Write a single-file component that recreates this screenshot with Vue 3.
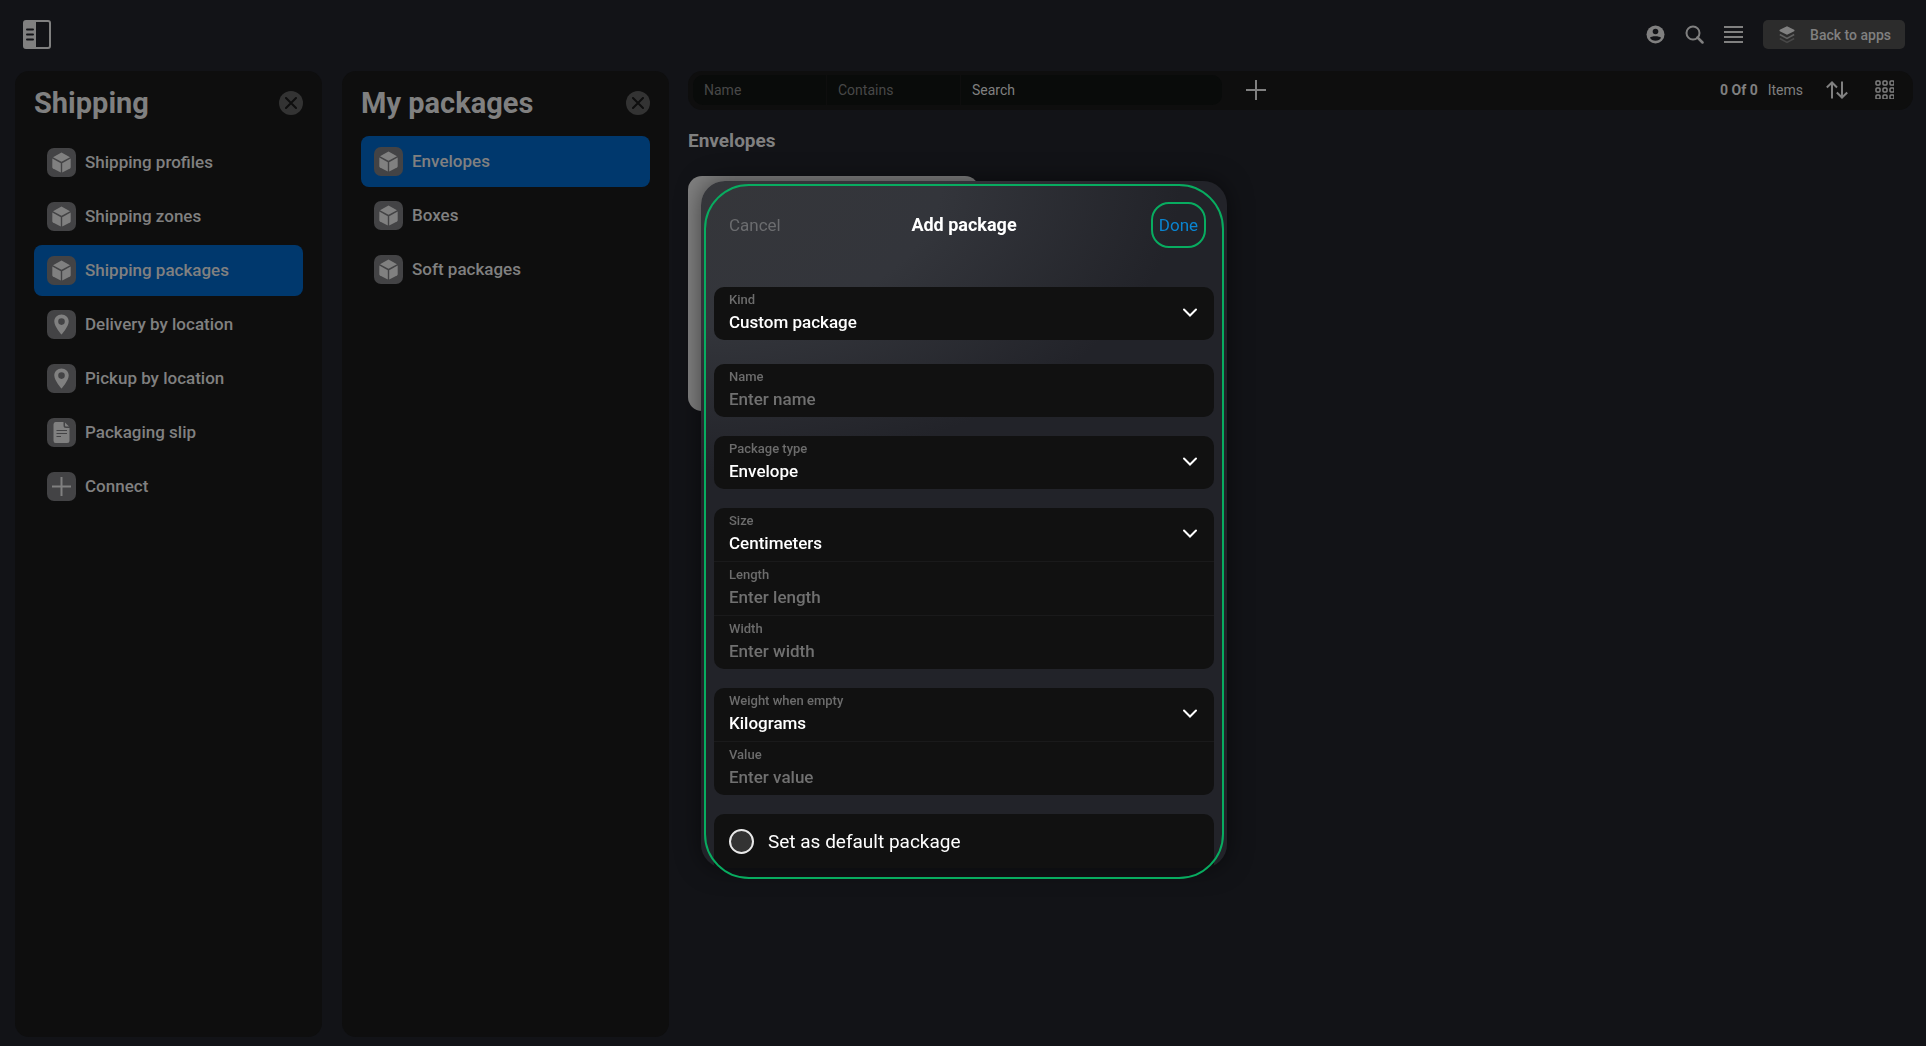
<template>
  <div class="page">
    <header class="topbar">
      <button class="icon-btn" aria-label="Toggle sidebar">
        <svg width="28" height="29" viewBox="0 0 28 29">
          <rect x="1" y="1" width="26" height="27" rx="2" fill="none" stroke="#808080" stroke-width="2" />
          <path d="M1 2h12v25H1z" fill="#808080" />
          <path d="M4 9.500h6M4 14.500h6M4 19.500h6" stroke="#121317" stroke-width="2" stroke-linecap="round" />
        </svg>
      </button>
      <div class="topbar-actions">
        <button class="icon-btn" aria-label="Account">
          <svg width="19" height="19" viewBox="0 0 19 19">
            <circle cx="9.500" cy="9.500" r="9" fill="#808080" />
            <circle cx="9.500" cy="6.500" r="2.800" fill="#121317" />
            <path d="M4 12.800c1-2 9.500-2 11 0c-1.500 4-9.500 4-11 0z" fill="#121317" />
          </svg>
        </button>
        <button class="icon-btn" aria-label="Search">
          <svg width="19" height="19" viewBox="0 0 19 19" fill="none" stroke="#808080">
            <circle cx="8" cy="8" r="6.500" stroke-width="2" />
            <path d="M12.500 12.500l5 5" stroke-width="2.500" stroke-linecap="round" />
          </svg>
        </button>
        <button class="icon-btn" aria-label="Menu">
          <svg width="19" height="19" viewBox="0 0 19 19">
            <path d="M0 2h19M0 7h19M0 12h19M0 17h19" stroke="#808080" stroke-width="2" />
          </svg>
        </button>
        <button class="btn-back">
          <svg width="16" height="18" viewBox="0 0 16 18">
            <path d="M8 0.300l7.200 3.500q.8.700 0 1.400L8 8.700L.8 5.200Q0 4.500.8 3.800z" fill="#808080" />
            <path d="M.8 8.500l7.200 4l7.200-4" fill="none" stroke="#606060" stroke-width="1.500" />
            <path d="M.8 12.500l7.200 4l7.200-4" fill="none" stroke="#484848" stroke-width="1.500" />
          </svg>
          <span>Back to apps</span>
        </button>
      </div>
    </header>

    <div class="layout">
      <nav v-for="panel in panels" :key="panel.title" class="panel" :class="panel.size">
        <div class="panel-head">
          <h1>{{ panel.title }}</h1>
          <button class="btn-close" :aria-label="'Close ' + panel.title">
            <svg width="12" height="12" viewBox="0 0 12 12">
              <path d="M1 1l10 10M11 1L1 11" stroke="#0e0e0e" stroke-width="2" stroke-linecap="round" />
            </svg>
          </button>
        </div>
        <button
          v-for="item in panel.items"
          :key="item.name"
          class="panel-item"
          :class="{ active: panel.active === item.name }"
          @click="panel.active = item.name"
        >
          <span class="tile">
            <svg v-if="item.icon === 'box'" width="19" height="21" viewBox="0 0 19 21" fill="#808080">
              <path d="M9.500 0.500L18 5.200L9.500 9.700L1 5.200z" />
              <path d="M0.300 6.600L8.800 11.200V20.500L1 16.400q-.7-.4-.7-1.200z" />
              <path d="M18.700 6.600L10.200 11.200V20.500L18 16.400q.7-.4.700-1.200z" />
            </svg>
            <svg v-else-if="item.icon === 'pin'" width="15" height="21" viewBox="0 0 15 21">
              <path
                d="M7.500 0.500C3.500 0.500 0.300 3.600 0.300 7.500C0.300 12.500 7.500 20.500 7.500 20.500S14.700 12.500 14.700 7.500C14.700 3.600 11.500 0.500 7.500 0.500zM7.500 4.300a3.300 3.300 0 1 1 0 6.600a3.300 3.300 0 1 1 0-6.600z"
                fill="#808080"
                fill-rule="evenodd"
              />
            </svg>
            <svg v-else-if="item.icon === 'doc'" width="17" height="21" viewBox="0 0 17 21">
              <path d="M2.500 0H10.500V3.500Q10.500 6 13 6H16.500V18.500Q16.500 21 14 21H2.500Q.5 21 .5 18.500V2.500Q.5 0 2.500 0z" fill="#808080" />
              <path d="M12 0.500L16 4.600H13Q12 4.600 12 3.600z" fill="#808080" />
              <path d="M3.500 8.500h10.500M3.500 11.500h10.500M3.500 14.500h4.500" stroke="#434345" />
            </svg>
            <svg v-else width="19" height="19" viewBox="0 0 19 19">
              <path d="M9.500 0v19M0 9.500h19" stroke="#808080" stroke-width="2" />
            </svg>
          </span>
          <span>{{ item.name }}</span>
        </button>
      </nav>

      <main class="content">
        <div class="toolbar">
          <div class="filter">
            <button class="filter-part">Name</button>
            <button class="filter-part">Contains</button>
            <input v-model="search" class="filter-input" placeholder="Search" aria-label="Search packages" />
          </div>
          <button class="icon-btn btn-add" aria-label="Add filter">
            <svg width="20" height="20" viewBox="0 0 20 20">
              <path d="M10 0v20M0 10h20" stroke="#808080" stroke-width="2" />
            </svg>
          </button>
          <div class="toolbar-right">
            <b>0 Of 0</b>
            <span>Items</span>
            <button class="icon-btn btn-sort" aria-label="Sort">
              <svg width="22" height="18" viewBox="0 0 22 18" fill="none" stroke="#808080" stroke-width="2">
                <path d="M6 17.500V2M0.800 6.500L6 1.500L11 6.500" />
                <path d="M16 0.500V16M10.800 11.500L16 16.500L21.200 11.500" />
              </svg>
            </button>
            <button class="icon-btn btn-grid" aria-label="Grid view">
              <svg width="19" height="19" viewBox="0 0 19 19" fill="none" stroke="#808080" stroke-width="1.500">
                <template v-for="y in 3" :key="y">
                  <rect v-for="x in 3" :key="x" :x="x * 7 - 6" :y="y * 7 - 6" width="4" height="4" rx="1" />
                </template>
              </svg>
            </button>
          </div>
        </div>
        <h2>Envelopes</h2>
        <div class="package-card"></div>
      </main>
    </div>

    <div class="overlay">
      <form class="modal" @submit.prevent>
        <div class="modal-inner">
          <div class="modal-head">
            <button type="button" class="btn-cancel">Cancel</button>
            <h3>Add package</h3>
            <button type="submit" class="btn-done">Done</button>
          </div>
          <div v-for="(group, i) in groups" :key="i" class="group">
            <div v-for="field in group" :key="field.id" class="field">
              <label :for="field.id">{{ field.label }}</label>
              <template v-if="field.options">
                <select :id="field.id" v-model="form[field.id]">
                  <option v-for="o in field.options" :key="o">{{ o }}</option>
                </select>
                <svg class="chevron" width="16" height="10" viewBox="0 0 16 10">
                  <path d="M2 1.500l6 6l6-6" fill="none" stroke="#fff" stroke-width="2" stroke-linecap="round" />
                </svg>
              </template>
              <input v-else :id="field.id" v-model="form[field.id]" type="text" :placeholder="field.placeholder" />
            </div>
          </div>
          <label class="default-row">
            <input v-model="form.isDefault" type="checkbox" />
            <span>Set as default package</span>
          </label>
        </div>
      </form>
    </div>
  </div>
</template>

<script setup>
import { ref, reactive } from 'vue'

const search = ref('')

const panels = reactive([
  {
    title: 'Shipping',
    size: 'panel-main',
    active: 'Shipping packages',
    items: [
      { name: 'Shipping profiles', icon: 'box' },
      { name: 'Shipping zones', icon: 'box' },
      { name: 'Shipping packages', icon: 'box' },
      { name: 'Delivery by location', icon: 'pin' },
      { name: 'Pickup by location', icon: 'pin' },
      { name: 'Packaging slip', icon: 'doc' },
      { name: 'Connect', icon: 'plus' }
    ]
  },
  {
    title: 'My packages',
    size: 'panel-sub',
    active: 'Envelopes',
    items: [
      { name: 'Envelopes', icon: 'box' },
      { name: 'Boxes', icon: 'box' },
      { name: 'Soft packages', icon: 'box' }
    ]
  }
])

const form = reactive({
  kind: 'Custom package',
  name: '',
  type: 'Envelope',
  size: 'Centimeters',
  length: '',
  width: '',
  weight: 'Kilograms',
  value: '',
  isDefault: false
})

const groups = [
  [{ id: 'kind', label: 'Kind', options: ['Custom package'] }],
  [{ id: 'name', label: 'Name', placeholder: 'Enter name' }],
  [{ id: 'type', label: 'Package type', options: ['Envelope', 'Box', 'Soft package'] }],
  [
    { id: 'size', label: 'Size', options: ['Centimeters', 'Inches'] },
    { id: 'length', label: 'Length', placeholder: 'Enter length' },
    { id: 'width', label: 'Width', placeholder: 'Enter width' }
  ],
  [
    { id: 'weight', label: 'Weight when empty', options: ['Kilograms', 'Pounds'] },
    { id: 'value', label: 'Value', placeholder: 'Enter value' }
  ]
]
</script>

<style>
body {
  background: #121317;
}
</style>

<style scoped>
.page {
  min-height: 100vh;
  display: flex;
  flex-direction: column;
  box-sizing: border-box;
  padding-bottom: 9px;
  background: #121317;
  color: #808080;
  font-family: Roboto, sans-serif;
}
.page * {
  box-sizing: border-box;
}
button,
input,
select {
  font-family: inherit;
  color: inherit;
  background: none;
  border: none;
  padding: 0;
  margin: 0;
  outline: none;
}
button {
  cursor: pointer;
}
svg {
  display: block;
  flex: none;
}
h1,
h2,
h3 {
  margin: 0;
}
.topbar {
  height: 71px;
  padding: 0 21px 2px 23px;
  display: flex;
  align-items: center;
  justify-content: space-between;
}
.topbar-actions {
  display: flex;
  align-items: center;
  gap: 20px;
}
.btn-back {
  display: flex;
  align-items: center;
  gap: 15px;
  height: 29px;
  padding: 0 14px 0 16px;
  border-radius: 5px;
  background: #2c2c2c;
  font-size: 14px;
  font-weight: 500;
}
.layout {
  flex: 1;
  display: flex;
  padding: 0 13px 0 15px;
}
.panel {
  flex: none;
  margin-right: 20px;
  padding: 0 19px;
  border-radius: 14px;
  background: #0e0e0e;
}
.panel-main {
  width: 307px;
}
.panel-sub {
  width: 327px;
  margin-right: 19px;
}
.panel-head {
  height: 65px;
  padding-bottom: 2px;
  display: flex;
  align-items: center;
  justify-content: space-between;
}
.panel-main .panel-head {
  height: 66px;
}
.panel-head h1 {
  font-size: 29px;
  font-weight: 700;
}
.btn-close {
  display: flex;
  align-items: center;
  justify-content: center;
  width: 24px;
  height: 24px;
  border-radius: 50%;
  background: #333;
}
.panel-item {
  display: flex;
  align-items: center;
  gap: 9px;
  width: 100%;
  height: 51px;
  margin-bottom: 3px;
  padding: 0 13px 1px;
  border-radius: 8px;
  font-size: 17px;
  line-height: 20px;
  font-weight: 500;
  text-align: left;
}
.panel-item.active {
  background: #00386d;
}
.tile {
  display: flex;
  align-items: center;
  justify-content: center;
  width: 29px;
  height: 29px;
  border-radius: 7px;
  background: #434345;
}
.content {
  flex: 1;
  min-width: 0;
}
.toolbar {
  display: flex;
  align-items: center;
  height: 39px;
  padding: 0 19px 2px 5px;
  border-radius: 14px;
  background: #0e0e0e;
  font-size: 14px;
}
.filter {
  display: flex;
  width: 529px;
  height: 30px;
  border-radius: 10px;
  background: #090b0a;
}
.filter-part {
  width: 134px;
  padding-left: 11px;
  border-right: 1px solid #0e0e0e;
  color: #484848;
  font-size: 14px;
  text-align: left;
}
.filter-input {
  flex: 1;
  min-width: 0;
  padding-left: 11px;
  font-size: 14px;
}
.filter-input::placeholder {
  color: #808080;
  opacity: 1;
}
.btn-add {
  margin-left: 24px;
}
.toolbar-right {
  display: flex;
  align-items: center;
  margin-left: auto;
}
.toolbar-right b {
  margin-right: 10px;
  font-weight: 700;
}
.btn-sort {
  margin-left: 23px;
}
.btn-grid {
  margin-left: 27px;
}
.content h2 {
  margin-top: 19px;
  font-size: 19px;
  line-height: 24px;
  font-weight: 700;
}
.package-card {
  width: 291px;
  height: 235px;
  margin-top: 23px;
  border-radius: 14px;
  background: #808080;
}
.overlay {
  position: fixed;
  inset: 0;
  display: flex;
  align-items: center;
  justify-content: center;
  padding: 3px 0 0 2px;
}
.modal {
  position: relative;
  width: 526px;
  border-radius: 24px;
  box-shadow: 0 0 25px rgba(0, 0, 0, 0.5);
}
/* focus outline around the whole sheet */
.modal::after {
  content: '';
  position: absolute;
  inset: 3px 3px -11px;
  border: 2px solid #08ac60;
  border-radius: 45px;
  pointer-events: none;
}
.modal-inner {
  overflow: hidden;
  padding: 0 13px;
  border-radius: 24px;
  background: radial-gradient(ellipse 480px 290px at 0 0, #35363a 0%, #33353b 50%, #222329 100%);
}
.modal-head {
  display: grid;
  grid-template-columns: 1fr auto 1fr;
  align-items: center;
  height: 87px;
  margin-bottom: 19px;
  padding: 0 8px;
}
.modal-head h3 {
  color: #fff;
  font-size: 18px;
  font-weight: 700;
}
.btn-cancel {
  justify-self: start;
  margin-left: 7px;
  color: #6b6c6f;
  font-size: 17px;
}
.btn-done {
  justify-self: end;
  width: 55px;
  height: 46px;
  border: 2px solid #08ac60;
  border-radius: 18px;
  color: #0a84d0;
  font-size: 17px;
}
.group {
  margin-bottom: 19px;
  border-radius: 10px;
  background: #111;
}
.group:nth-child(2) {
  margin-bottom: 24px;
}
.field {
  position: relative;
  height: 53px;
  padding: 4px 15px 0;
}
.field + .field {
  height: 54px;
  border-top: 1px solid #1a1a1b;
}
.field label {
  display: block;
  color: #6c6c6c;
  font-size: 13px;
  line-height: 17px;
  font-weight: 500;
}
.field select,
.field input {
  display: block;
  width: 100%;
  height: 24px;
  margin-top: 2px;
  appearance: none;
  color: #fff;
  font-size: 17px;
  line-height: 24px;
  font-weight: 500;
}
.field input::placeholder {
  color: #707070;
  opacity: 1;
}
.chevron {
  position: absolute;
  top: 21px;
  right: 16px;
  pointer-events: none;
}
.default-row {
  display: flex;
  align-items: center;
  gap: 14px;
  height: 54px;
  padding: 0 15px;
  border-radius: 10px 10px 0 0;
  background: #111;
  color: #fff;
  font-size: 19px;
}
.default-row input {
  appearance: none;
  width: 25px;
  height: 25px;
  border: 2px solid #e8e8e8;
  border-radius: 50%;
  background: #333;
}
.default-row input:checked {
  background: #0a84d0;
}
</style>
